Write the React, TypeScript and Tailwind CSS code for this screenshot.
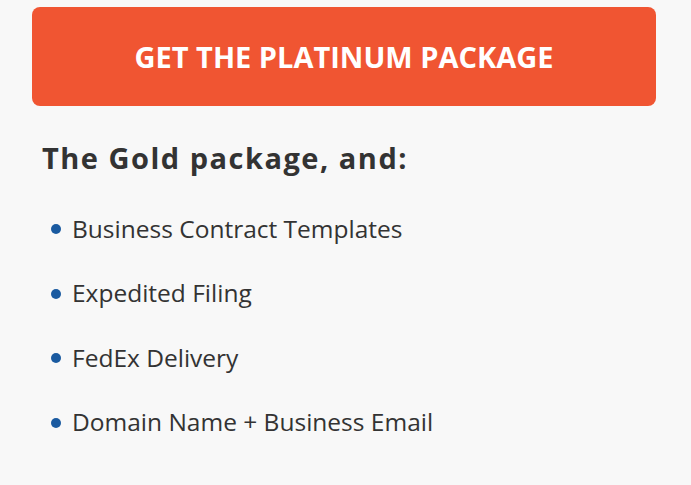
import React from "react";

const items = [
  "Business Contract Templates",
  "Expedited Filing",
  "FedEx Delivery",
  "Domain Name + Business Email",
];

export default function App() {
  return (
    <div
      className="w-[691px] h-[485px] bg-[#f8f8f8] overflow-hidden"
      style={{ fontFamily: "'Open Sans', sans-serif" }}
    >
      <div className="pt-[7px] pl-[32px] pr-[35px]">
        <button className="w-full h-[99px] rounded-[8px] bg-[#f05532] text-white font-bold text-[29px] flex items-center justify-center">
          GET THE PLATINUM PACKAGE
        </button>
      </div>
      <h2 className="mt-[36px] ml-[42px] text-[29px] leading-[32px] tracking-[1.5px] font-bold text-[#333333]">
        The Gold package, and:
      </h2>
      <ul className="mt-[39px] ml-[51px] flex flex-col gap-[32.5px]">
        {items.map((t) => (
          <li key={t} className="flex items-center h-[32px] text-[24.5px] font-normal text-[#333333]">
            <span className="w-[10px] h-[10px] rounded-full bg-[#1a5aa0] mr-[11px] shrink-0" />
            <span>{t}</span>
          </li>
        ))}
      </ul>
    </div>
  );
}
